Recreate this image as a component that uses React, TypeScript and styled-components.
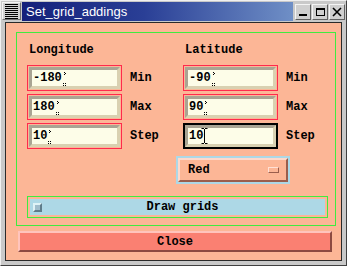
import React from "react";
import styled, { createGlobalStyle } from "styled-components";

const Global = createGlobalStyle`
  html, body { margin: 0; padding: 0; background: #c8c8c8; }
  * { box-sizing: border-box; }
`;

const MONO = `"Liberation Mono", "DejaVu Sans Mono", monospace`;

const Window = styled.div`
  width: 347px;
  height: 266px;
  background: #c9c9c9;
  border-top: 1px solid #f0f0f0;
  border-left: 1px solid #f0f0f0;
  border-right: 1px solid #404040;
  border-bottom: 1px solid #404040;
  display: flex;
  flex-direction: column;
`;

const TitleBar = styled.div`
  height: 21px;
  display: flex;
  align-items: flex-start;
  padding-top: 1px;
`;

const MenuButton = styled.div`
  width: 19px;
  height: 18px;
  margin-left: 1px;
  background: #d0d0d0;
  border-top: 1px solid #f4f4f4;
  border-left: 1px solid #f4f4f4;
  border-right: 1px solid #707070;
  border-bottom: 1px solid #707070;
  display: flex;
  flex-direction: column;
  justify-content: center;
  gap: 1px;
  padding: 0 2px;
`;

const MenuLine = styled.div`
  height: 1px;
  background: #000;
`;

const TitleArea = styled.div`
  flex: 1;
  height: 19px;
  margin-left: 1px;
  background: linear-gradient(90deg, #14207a 0%, #2a3f96 45%, #6f8fc6 100%);
  color: #ffffff;
  font-family: "Liberation Sans", Arial, sans-serif;
  font-size: 13px;
  line-height: 19px;
  padding-left: 4px;
  white-space: nowrap;
`;

const WinButtons = styled.div`
  display: flex;
  gap: 1px;
  margin-left: 2px;
  margin-right: 1px;
  margin-top: 2px;
`;

const WinButton = styled.div`
  width: 16px;
  height: 16px;
  background: #cfcfcf;
  border-top: 1px solid #f4f4f4;
  border-left: 1px solid #f4f4f4;
  border-right: 1px solid #606060;
  border-bottom: 1px solid #606060;
  display: flex;
  align-items: center;
  justify-content: center;
`;

const Panel = styled.div`
  margin-left: 4px;
  width: 337px;
  height: 239px;
  background: #fcb696;
  border: 1px solid #2a2a2a;
  padding: 9px 0 0 10px;
  display: flex;
  flex-direction: column;
`;

const Frame = styled.div`
  width: 320px;
  height: 194px;
  border: 1px solid #3fec3f;
  padding: 10px 0 0 10px;
  display: flex;
  flex-direction: column;
`;

const Columns = styled.div`
  display: flex;
`;

const Column = styled.div<{ $w: number }>`
  width: ${(p) => p.$w}px;
  display: flex;
  flex-direction: column;
  gap: 3px;
`;

const Heading = styled.div`
  font-family: ${MONO};
  font-weight: bold;
  font-size: 12px;
  line-height: 14px;
  height: 14px;
  color: #000;
  margin-left: 2px;
  margin-bottom: 5px;
`;

const FieldRow = styled.div`
  display: flex;
  align-items: center;
  gap: 8px;
  height: 26px;
`;

const EntryOuter = styled.div<{ $focus?: boolean }>`
  width: 95px;
  height: 26px;
  border: ${(p) => (p.$focus ? "2px solid #000" : "1px solid #ff2a4c")};
  padding: ${(p) => (p.$focus ? "0" : "1px")};
`;

const EntryInner = styled.div`
  width: 100%;
  height: 100%;
  background: #fdfde8;
  border-style: solid;
  border-width: 3px;
  border-color: #a9a493 #d9d1b1 #d9d1b1 #a9a493;
  display: flex;
  align-items: center;
  padding-left: 1px;
  font-family: ${MONO};
  font-weight: bold;
  font-size: 12px;
  color: #000;
`;

const FieldLabel = styled.div`
  font-family: ${MONO};
  font-weight: bold;
  font-size: 12px;
  color: #000;
`;

const OptionRow = styled.div`
  display: flex;
  padding-left: 149px;
  margin-top: 7px;
`;

const OptionOuter = styled.div`
  width: 114px;
  height: 28px;
  border: 2px solid #add8e6;
`;

const OptionButton = styled.div`
  width: 100%;
  height: 100%;
  background: #fcb696;
  border-style: solid;
  border-width: 2px;
  border-color: #ffd9cb #9a5e4c #9a5e4c #ffd9cb;
  display: flex;
  align-items: center;
  justify-content: space-between;
  padding: 0 7px 0 8px;
  font-family: ${MONO};
  font-weight: bold;
  font-size: 12px;
  color: #000;
`;

const OptionIndicator = styled.div`
  width: 11px;
  height: 6px;
  background: #fcb696;
  border-style: solid;
  border-width: 1px;
  border-color: #ffe0d4 #9a5e4c #9a5e4c #ffe0d4;
`;

const CheckFrame = styled.div`
  width: 301px;
  height: 22px;
  margin-top: 12px;
  border: 1px solid #3fec3f;
  padding: 2px;
`;

const CheckButton = styled.div`
  width: 100%;
  height: 100%;
  background: #add8e6;
  display: flex;
  align-items: center;
  padding-left: 3px;
  font-family: ${MONO};
  font-weight: bold;
  font-size: 12px;
  color: #000;
`;

const CheckIndicator = styled.div`
  width: 9px;
  height: 9px;
  background: #9fbccb;
  border-style: solid;
  border-width: 2px;
  border-color: #dff2f6 #5f7c8a #5f7c8a #dff2f6;
`;

const CheckText = styled.div`
  flex: 1;
  text-align: center;
  padding-right: 2px;
`;

const CloseButton = styled.div`
  width: 314px;
  height: 21px;
  margin-top: 5px;
  margin-left: 2px;
  background: #fa8072;
  border-style: solid;
  border-width: 2px;
  border-color: #ffc4bc #8c4a40 #8c4a40 #ffc4bc;
  display: flex;
  align-items: center;
  justify-content: center;
  font-family: ${MONO};
  font-weight: bold;
  font-size: 12px;
  color: #000;
`;

const GhostCursor = () => (
  <svg width="5" height="14" viewBox="0 0 5 14" style={{ marginLeft: -1, marginTop: 2 }}>
    <rect x="3" y="0" width="1" height="1" fill="#000" />
    <rect x="4" y="1" width="1" height="1" fill="#000" />
    <rect x="3" y="2" width="1" height="1" fill="#000" />
    <rect x="2" y="11" width="1" height="1" fill="#000" />
    <rect x="4" y="11" width="1" height="1" fill="#000" />
    <rect x="2" y="13" width="1" height="1" fill="#000" />
    <rect x="4" y="13" width="1" height="1" fill="#000" />
  </svg>
);

const IBeam = () => (
  <svg width="7" height="16" viewBox="0 0 7 16" style={{ marginLeft: -2 }}>
    <path d="M0.5 0.5h2.5M4 0.5h2.5M3.5 1v14M0.5 15.5h2.5M4 15.5h2.5" stroke="#000" strokeWidth="1" fill="none" />
  </svg>
);

type Field = { value: string; label: string; focus?: boolean };

const Entry = ({ f }: { f: Field }) => (
  <FieldRow>
    <EntryOuter $focus={f.focus}>
      <EntryInner>
        {f.value}
        {f.focus ? <IBeam /> : <GhostCursor />}
      </EntryInner>
    </EntryOuter>
    <FieldLabel>{f.label}</FieldLabel>
  </FieldRow>
);

const lon: Field[] = [
  { value: "-180", label: "Min" },
  { value: "180", label: "Max" },
  { value: "10", label: "Step" },
];
const lat: Field[] = [
  { value: "-90", label: "Min" },
  { value: "90", label: "Max" },
  { value: "10", label: "Step", focus: true },
];

export default function App() {
  return (
    <>
      <Global />
      <Window>
        <TitleBar>
          <MenuButton>
            {Array.from({ length: 8 }).map((_, i) => (
              <MenuLine key={i} />
            ))}
          </MenuButton>
          <TitleArea>Set_grid_addings</TitleArea>
          <WinButtons>
            <WinButton>
              <svg width="12" height="12" viewBox="0 0 12 12">
                <rect x="2" y="8" width="8" height="2" fill="#000" />
              </svg>
            </WinButton>
            <WinButton>
              <svg width="12" height="12" viewBox="0 0 12 12">
                <rect x="2.5" y="2.5" width="8" height="7" fill="none" stroke="#000" />
                <rect x="2" y="2" width="9" height="2" fill="#000" />
              </svg>
            </WinButton>
            <WinButton>
              <svg width="12" height="12" viewBox="0 0 12 12">
                <path d="M2 2L10 10M10 2L2 10" stroke="#000" strokeWidth="1.6" />
              </svg>
            </WinButton>
          </WinButtons>
        </TitleBar>
        <Panel>
          <Frame>
            <Columns>
              <Column $w={156}>
                <Heading>Longitude</Heading>
                {lon.map((f) => (
                  <Entry key={f.label} f={f} />
                ))}
              </Column>
              <Column $w={150}>
                <Heading>Latitude</Heading>
                {lat.map((f) => (
                  <Entry key={f.label} f={f} />
                ))}
              </Column>
            </Columns>
            <OptionRow>
              <OptionOuter>
                <OptionButton>
                  Red
                  <OptionIndicator />
                </OptionButton>
              </OptionOuter>
            </OptionRow>
            <CheckFrame>
              <CheckButton>
                <CheckIndicator />
                <CheckText>Draw grids</CheckText>
              </CheckButton>
            </CheckFrame>
          </Frame>
          <CloseButton>Close</CloseButton>
        </Panel>
      </Window>
    </>
  );
}
